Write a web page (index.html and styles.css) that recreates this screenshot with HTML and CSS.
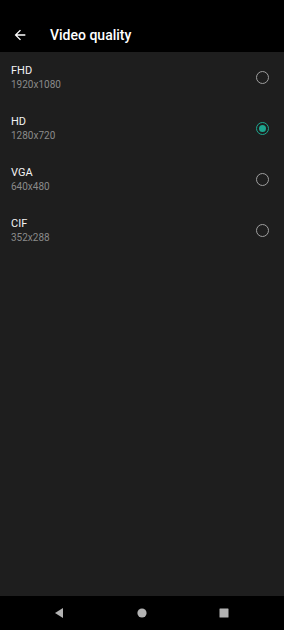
FILE: index.html
```html
<!DOCTYPE html>
<html lang="en">
<head>
    <meta charset="UTF-8">
    <meta name="viewport" content="width=device-width, initial-scale=1.0">
    <title>Video quality</title>
    <link rel="stylesheet" href="styles.css">
</head>
<body>
    <div class="screen">
        <header class="topBar">
            <div class="statusBar"></div>
            <div class="toolbar">
                <svg class="backIcon" width="16" height="16" viewBox="0 0 24 24">
                    <path d="M20 11H7.83l5.59-5.59L12 4l-8 8 8 8 1.41-1.41L7.83 13H20v-2z" fill="#fff"/>
                </svg>
                <h1>Video quality</h1>
            </div>
        </header>

        <main class="list">
            <div class="item">
                <div class="text">
                    <div class="name">FHD</div>
                    <div class="size">1920x1080</div>
                </div>
                <span class="radio"></span>
            </div>
            <div class="item">
                <div class="text">
                    <div class="name">HD</div>
                    <div class="size">1280x720</div>
                </div>
                <span class="radio checked"></span>
            </div>
            <div class="item">
                <div class="text">
                    <div class="name">VGA</div>
                    <div class="size">640x480</div>
                </div>
                <span class="radio"></span>
            </div>
            <div class="item">
                <div class="text">
                    <div class="name">CIF</div>
                    <div class="size">352x288</div>
                </div>
                <span class="radio"></span>
            </div>
        </main>

        <nav class="navBar">
            <svg width="12" height="12" viewBox="0 0 12 12"><path d="M10 1v10L2 6z" fill="#b3b3b3"/></svg>
            <svg width="12" height="12" viewBox="0 0 12 12"><circle cx="6" cy="6" r="4.6" fill="#b3b3b3"/></svg>
            <svg width="12" height="12" viewBox="0 0 12 12"><rect x="1.5" y="1.5" width="9" height="9" rx="0.5" fill="#b3b3b3"/></svg>
        </nav>
    </div>
</body>
</html>
```

FILE: styles.css
```css
html, body {
    margin: 0;
    padding: 0;
}
body {
    background-color: #000;
    font-family: Roboto, "Liberation Sans", sans-serif;
    color: #fff;
}
.screen {
    width: 284px;
    height: 630px;
    display: flex;
    flex-direction: column;
}
.topBar {
    background-color: #000;
}
.statusBar {
    height: 17px;
}
.toolbar {
    height: 35px;
    display: flex;
    align-items: center;
    padding-left: 12px;
}
.backIcon {
    margin-right: 22px;
}
.toolbar h1 {
    margin: 0;
    font-size: 14px;
    font-weight: 500;
    letter-spacing: 0;
}
.list {
    flex: 1;
    background-color: #1e1e1e;
}
.item {
    height: 51px;
    display: flex;
    align-items: center;
    justify-content: space-between;
    padding: 0 15px 0 11px;
}
.name {
    font-size: 11px;
    line-height: 14px;
    color: #f2f2f2;
}
.size {
    font-size: 10px;
    line-height: 14px;
    color: #8a8a8a;
}
.radio {
    width: 11px;
    height: 11px;
    border: 1.5px solid #9e9e9e;
    border-radius: 50%;
    position: relative;
}
.radio.checked {
    border-color: #1da68f;
}
.radio.checked::after {
    content: "";
    position: absolute;
    left: 2px;
    top: 2px;
    width: 7px;
    height: 7px;
    border-radius: 50%;
    background-color: #1da68f;
}
.navBar {
    height: 34px;
    background-color: #000;
    display: flex;
    align-items: center;
    justify-content: space-between;
    padding: 0 54px 0 53px;
}
```
